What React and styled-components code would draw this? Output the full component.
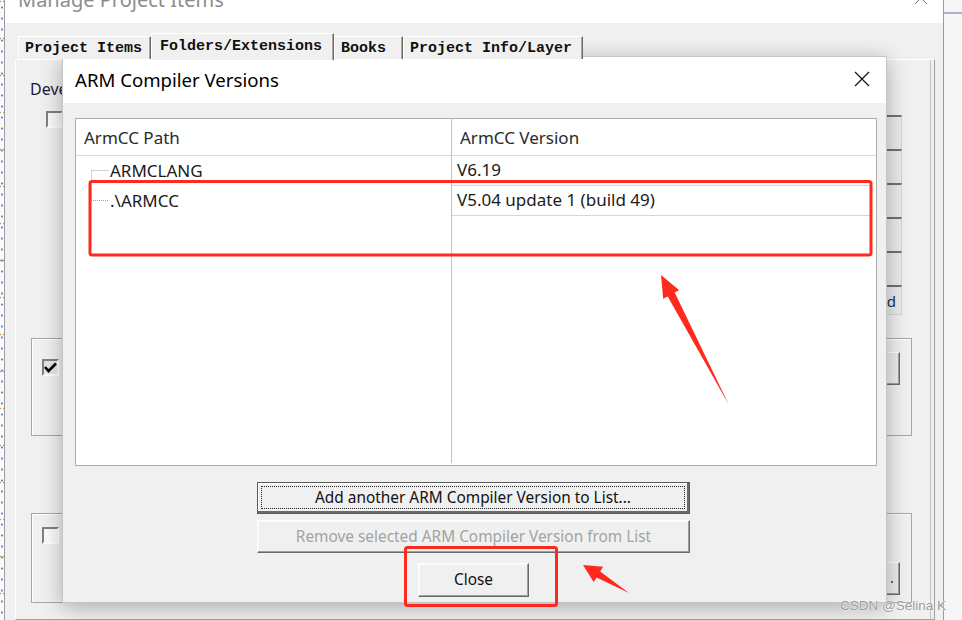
import React from 'react';
import styled, { createGlobalStyle } from 'styled-components';

const UI = '"Noto Sans", "Open Sans", "DejaVu Sans", sans-serif';
const MONO = '"Liberation Mono", "DejaVu Sans Mono", monospace';

const GlobalStyle = createGlobalStyle`
  html, body {
    margin: 0;
    padding: 0;
    background: #f4f4f4;
    overflow: hidden;
  }
  #root {
    width: 962px;
    height: 620px;
  }
`;

function App() {
  return (
    <Screen>
      <GlobalStyle />
      <IdeStrip />
      <ManageWindow>
        <WinTitle>
          <WinTitleText>Manage Project Items</WinTitleText>
          <WinClose width="14" height="14" viewBox="0 0 14 14">
            <path d="M1 1 L13 13 M13 1 L1 13" stroke="#777" strokeWidth="1" />
          </WinClose>
        </WinTitle>
        <WinBody>
          <TabStrip>
            <Tab w={133}>Project Items</Tab>
            <Tab w={183} selected>Folders/Extensions</Tab>
            <Tab w={69}>Books</Tab>
            <Tab w={180}>Project Info/Layer</Tab>
          </TabStrip>
          <TabPanel>
            <TopArea>
              {/* only the strip left of the dialog shows, so clip it there */}
              <LeftTop>
                <PanelLabel>Deve</PanelLabel>
                <CheckRow>
                  <CheckBox />
                </CheckRow>
              </LeftTop>
              <ButtonColumn>
                <SideButton />
                <SideButton />
                <SideButton />
                <SideButton />
                <SideButton />
                <SideButton last>
                  <SideGlyph>d</SideGlyph>
                </SideButton>
              </ButtonColumn>
            </TopArea>
            <GroupBox h={98}>
              <CheckBox checked top={20}>
                <svg width="13" height="11" viewBox="0 0 13 11">
                  <path d="M1 5 L4.5 9 L12 1.5" stroke="#000" strokeWidth="2.6" fill="none" />
                </svg>
              </CheckBox>
              <BoxButton top={13} />
            </GroupBox>
            <GroupBox h={90} gap={77}>
              <CheckBox top={13} />
              <BoxButton top={48}>
                <BoxDot />
              </BoxButton>
            </GroupBox>
          </TabPanel>
        </WinBody>
      </ManageWindow>
      <Gutter>
        <GutterRule />
      </Gutter>

      <Modal>
        <ModalTitle>
          <ModalTitleText>ARM Compiler Versions</ModalTitleText>
          <svg width="16" height="16" viewBox="0 0 16 16">
            <path d="M1 1 L15 15 M15 1 L1 15" stroke="#111" strokeWidth="1.2" />
          </svg>
        </ModalTitle>
        <ModalBody>
          <ListView>
            <Column divider>
              <HeaderCell>ArmCC Path</HeaderCell>
              <PathRow>
                <TreeLine width="20" height="30" viewBox="0 0 20 30">
                  <path
                    d="M1.5 14.5 H19 M1.5 14.5 V30"
                    fill="none"
                    stroke="#a4a4a4"
                    strokeDasharray="1 1"
                  />
                </TreeLine>
                ARMCLANG
              </PathRow>
              <PathRow>
                <TreeLine width="20" height="30" viewBox="0 0 20 30">
                  <path
                    d="M1.5 0 V14.5 H19"
                    fill="none"
                    stroke="#a4a4a4"
                    strokeDasharray="1 1"
                  />
                </TreeLine>
                .\ARMCC
              </PathRow>
            </Column>
            <Column>
              <HeaderCell>ArmCC Version</HeaderCell>
              <VersionRow lined>V6.19</VersionRow>
              <VersionRow lined>V5.04 update 1 (build 49)</VersionRow>
              <VersionRow />
            </Column>
          </ListView>
          <ButtonStack>
            <DlgButton w={433} h={32} gap={16} isDefault>
              <FocusRing>Add another ARM Compiler Version to List...</FocusRing>
            </DlgButton>
            <DlgButton w={433} h={33} gap={6} disabled>
              Remove selected ARM Compiler Version from List
            </DlgButton>
            <DlgButton w={111} h={34} gap={10}>
              Close
            </DlgButton>
          </ButtonStack>
        </ModalBody>
      </Modal>

      <Annotations width="962" height="620" viewBox="0 0 962 620">
        <rect x="90" y="181.5" width="781" height="73.5" rx="2" fill="none" stroke="#fe2a1f" strokeWidth="3" />
        <rect x="405.5" y="547.5" width="151" height="58" rx="2" fill="none" stroke="#fe2a1f" strokeWidth="3" />
        <polygon
          points="661,275 679.2,290.3 674.7,292.6 729,405 667.7,296.4 663.2,298.7"
          fill="#fe2a1f"
        />
        <polygon
          points="583,565 603.1,566.7 600.2,571.4 629,593 596.6,577.4 593.7,582.1"
          fill="#fe2a1f"
        />
      </Annotations>
      <Watermark>CSDN @Selina K</Watermark>
    </Screen>
  );
}

export default App;

// background window

const Screen = styled.div`
  position: relative;
  display: flex;
  width: 962px;
  height: 620px;
  overflow: hidden;
  background: #f4f4f4;
  font-family: ${UI};
`;

const IdeStrip = styled.div`
  width: 4px;
  flex-shrink: 0;
  background-color: #fbfbfb;
  background-image: radial-gradient(circle, #5a86d6 0.8px, transparent 1.3px),
    radial-gradient(circle, #c98a3a 0.7px, transparent 1.2px);
  background-size: 4px 11px, 4px 37px;
  background-position: 0 2px, 2px 20px;
`;

const ManageWindow = styled.div`
  width: 940px;
  flex-shrink: 0;
  box-sizing: border-box;
  display: flex;
  flex-direction: column;
  border-left: 1px solid #9c9c9c;
  border-right: 1px solid #9c9c9c;
`;

const WinTitle = styled.div`
  height: 23px;
  display: flex;
  justify-content: space-between;
  align-items: flex-start;
  background: #fff;
  overflow: hidden;
`;

const WinTitleText = styled.div`
  margin-top: -10px;
  padding-left: 13px;
  font-size: 20px;
  line-height: 20px;
  color: #8c8c8c;
`;

const WinClose = styled.svg`
  margin-top: -9px;
  margin-right: 15px;
`;

const WinBody = styled.div`
  flex: 1;
  display: flex;
  flex-direction: column;
  background: #f0f0f0;
  padding: 10px 8px 0 10px;
`;

const TabStrip = styled.div`
  position: relative;
  z-index: 1;
  display: flex;
  align-items: flex-end;
  height: 26px;
  padding-left: 3px;
`;

const Tab = styled.div`
  box-sizing: border-box;
  width: ${({ w }) => w}px;
  height: ${({ selected }) => (selected ? 27 : 23)}px;
  margin-bottom: ${({ selected }) => (selected ? -1 : 0)}px;
  display: flex;
  align-items: center;
  padding: ${({ selected }) => (selected ? '0 0 2px 8px' : '0 0 0 6px')};
  border: 1px solid;
  border-color: #fff #6a6a6a transparent #fff;
  border-bottom: none;
  box-shadow: inset -1px 0 #a8a8a8;
  background: #f0f0f0;
  font-family: ${MONO};
  font-weight: bold;
  font-size: 15px;
  color: #111;
  white-space: nowrap;
`;

const TabPanel = styled.div`
  flex: 1;
  display: flex;
  flex-direction: column;
  border: 1px solid;
  border-color: #fff #a0a0a0 #a0a0a0 #fff;
  box-shadow: inset -3px 0 #f0f0f0, inset -4px 0 #c4c4c4;
  padding: 0 22px 0 14px;
`;

const TopArea = styled.div`
  height: 278px;
  display: flex;
  justify-content: space-between;
`;

const LeftTop = styled.div`
  width: 32px;
  overflow: hidden;
  padding-top: 19px;
`;

const PanelLabel = styled.div`
  font-size: 16px;
  line-height: 20px;
  color: #1c1c3c;
  white-space: nowrap;
`;

const CheckRow = styled.div`
  display: flex;
  align-items: center;
  margin: 12px 0 0 16px;
`;

const CheckBox = styled.div`
  box-sizing: border-box;
  width: 17px;
  height: 17px;
  flex-shrink: 0;
  margin-top: ${({ top }) => top || 0}px;
  margin-left: ${({ top }) => (top ? 10 : 0)}px;
  display: flex;
  align-items: center;
  justify-content: center;
  border: 2px solid;
  border-color: #808080 #fff #fff #808080;
  background: ${({ checked }) => (checked ? '#e6e6e6' : '#fafafa')};
`;

const ButtonColumn = styled.div`
  display: flex;
  flex-direction: column;
  padding-top: 55px;
  margin-right: 10px;
`;

const SideButton = styled.div`
  box-sizing: border-box;
  width: 80px;
  height: ${({ last }) => (last ? 30 : 34)}px;
  display: flex;
  align-items: center;
  justify-content: flex-end;
  padding-right: 5px;
  border-top: 2px solid #727272;
  border-right: 1px solid #d6d6d6;
  border-bottom: ${({ last }) => (last ? '1px solid #d6d6d6' : 'none')};
  background: #ebebeb;
`;

const SideGlyph = styled.span`
  font-size: 15px;
  color: #23305a;
`;

const GroupBox = styled.div`
  box-sizing: border-box;
  height: ${({ h }) => h}px;
  margin: ${({ gap }) => gap || 0}px 0 0 1px;
  display: flex;
  justify-content: space-between;
  align-items: flex-start;
  border: 1px solid #a6a6a6;
  box-shadow: inset 1px 1px #fff;
`;

const BoxButton = styled.div`
  box-sizing: border-box;
  width: 80px;
  height: 33px;
  margin: ${({ top }) => top}px 11px 0 0;
  display: flex;
  align-items: center;
  justify-content: flex-end;
  padding-right: 6px;
  border: 1px solid;
  border-color: #fff #6a6a6a #6a6a6a #fff;
  box-shadow: inset -1px -1px #a0a0a0;
  background: #ececec;
`;

const BoxDot = styled.span`
  width: 2px;
  height: 2px;
  margin-top: 6px;
  background: #666;
`;

const Gutter = styled.div`
  flex: 1;
  background: #f6f6f6;
`;

const GutterRule = styled.div`
  height: 2px;
  margin-top: 12px;
  background: #a9b5c6;
`;

// ARM Compiler Versions dialog

const Modal = styled.div`
  position: absolute;
  left: 62px;
  top: 56px;
  width: 825px;
  height: 547px;
  box-sizing: border-box;
  display: flex;
  flex-direction: column;
  border: 1px solid #c6c6c6;
  background: #f0f0f0;
  box-shadow: 0 4px 20px rgba(0, 0, 0, 0.3);
`;

const ModalTitle = styled.div`
  box-sizing: border-box;
  height: 46px;
  flex-shrink: 0;
  display: flex;
  align-items: center;
  justify-content: space-between;
  padding: 0 16px 2px 12px;
  background: #fff;
`;

const ModalTitleText = styled.div`
  font-size: 18.6px;
  color: #000;
`;

const ModalBody = styled.div`
  flex: 1;
  display: flex;
  flex-direction: column;
  padding: 15px 9px 0 12px;
`;

const ListView = styled.div`
  box-sizing: border-box;
  height: 348px;
  display: grid;
  grid-template-columns: 376px 1fr;
  border: 1px solid #acacac;
  background: #fff;
  font-size: 17px;
  color: #1a1a1a;
`;

const Column = styled.div`
  display: flex;
  flex-direction: column;
  border-right: ${({ divider }) => (divider ? '1px solid #c2c2c2' : 'none')};
  margin-bottom: ${({ divider }) => (divider ? 2 : 0)}px;
`;

const HeaderCell = styled.div`
  box-sizing: border-box;
  height: 37px;
  display: flex;
  align-items: center;
  padding-left: 8px;
  border-bottom: 1px solid #d8d8d8;
  color: #2a2a2a;
`;

const PathRow = styled.div`
  box-sizing: border-box;
  height: 30px;
  display: flex;
  align-items: center;
  padding: 0 0 2px 14px;
`;

const TreeLine = styled.svg`
  flex-shrink: 0;
  margin-bottom: -2px;
`;

const VersionRow = styled.div`
  box-sizing: border-box;
  height: 30px;
  display: flex;
  align-items: center;
  padding: 0 0 2px 5px;
  margin-right: 3px;
  border-bottom: ${({ lined }) => (lined ? '1px solid #d6d6d6' : 'none')};
`;

const ButtonStack = styled.div`
  display: flex;
  flex-direction: column;
  align-items: center;
  padding-right: 5px;
`;

const DlgButton = styled.div`
  box-sizing: border-box;
  width: ${({ w }) => w}px;
  height: ${({ h }) => h}px;
  margin-top: ${({ gap }) => gap}px;
  display: flex;
  align-items: center;
  justify-content: center;
  padding: ${({ isDefault }) => (isDefault ? '3px' : '0 0 1px')};
  border: 1px solid;
  border-color: ${({ isDefault }) =>
    isDefault ? '#5a5a5a' : '#fff #6a6a6a #6a6a6a #fff'};
  box-shadow: ${({ isDefault }) =>
    isDefault
      ? 'inset -2px -2px #6a6a6a, inset 1px 1px #fff'
      : 'inset -1px -1px #a0a0a0, inset 1px 1px #f8f8f8'};
  background: #f0f0f0;
  font-size: 15.4px;
  color: ${({ disabled }) => (disabled ? '#a3a3a3' : '#111')};
  white-space: nowrap;
`;

const FocusRing = styled.div`
  flex: 1;
  align-self: stretch;
  display: flex;
  align-items: center;
  justify-content: center;
  border: 1px dotted #222;
  margin-right: 1px;
  margin-bottom: 1px;
`;

// annotations laid over the screenshot

const Annotations = styled.svg`
  position: absolute;
  left: 0;
  top: 0;
  pointer-events: none;
`;

const Watermark = styled.div`
  position: absolute;
  right: 16px;
  bottom: 7px;
  font-family: "Liberation Sans", Arial, sans-serif;
  font-size: 13.5px;
  line-height: 15px;
  color: #9a9a9a;
  text-shadow: 0 0 2px #fff, 0 0 1px #fff;
`;
